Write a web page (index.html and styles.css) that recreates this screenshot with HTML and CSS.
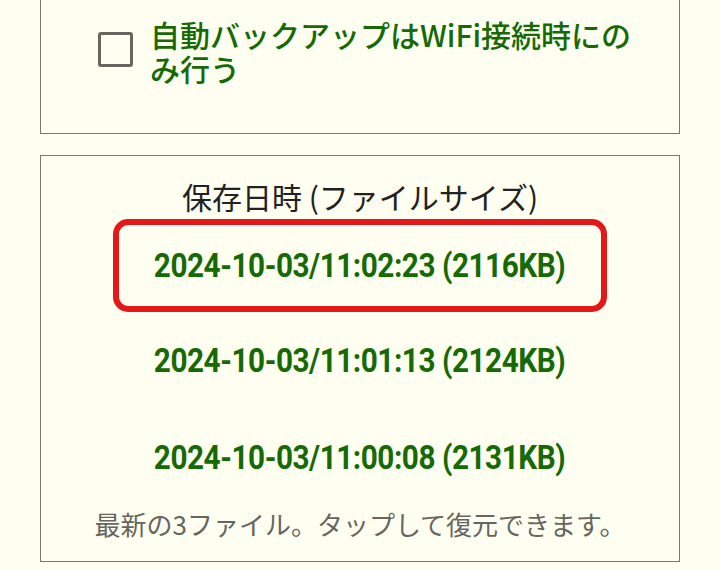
FILE: index.html
```html
<!DOCTYPE html>
<html lang="ja">
<head>
    <meta charset="UTF-8">
    <meta name="viewport" content="width=device-width, initial-scale=1.0">
    <title>バックアップ設定</title>
    <link rel="stylesheet" href="styles.css">
</head>
<body>

    <!-- WiFi option -->
    <div class="panel panel-option">
        <label class="option">
            <span class="check"></span>
            <span class="option-text">自動バックアップはWiFi接続時にのみ行う</span>
        </label>
    </div>

    <!-- Backup list -->
    <div class="panel panel-files">
        <h3 class="files-title">保存日時 (ファイルサイズ)</h3>
        <ul class="files">
            <li class="file selected"><span class="file-name">2024-10-03/11:02:23 (2116KB)</span></li>
            <li class="file"><span class="file-name">2024-10-03/11:01:13 (2124KB)</span></li>
            <li class="file"><span class="file-name">2024-10-03/11:00:08 (2131KB)</span></li>
        </ul>
        <p class="files-note">最新の3ファイル。タップして復元できます。</p>
    </div>

</body>
</html>
```

FILE: styles.css
```css
/* page */
body {
    margin: 0;
    padding: 0 40px;
    background-color: #fefff0;
    font-family: 'Noto Sans CJK JP', 'Noto Sans', sans-serif;
}

.panel {
    border: 1px solid #77776f;
    background-color: #fefff0;
}

/* checkbox option */
.panel-option {
    margin-top: -20px;
    padding: 36px 40px 48px 57px;
}

.option {
    display: flex;
    align-items: flex-start;
    gap: 17px;
}

.check {
    flex: none;
    width: 29px;
    height: 29px;
    margin-top: 15px;
    border: 3px solid #66665f;
    border-radius: 3px;
}

.option-text {
    font-size: 30px;
    line-height: 34px;
    font-weight: 500;
    color: #166a04;
}

/* file list */
.panel-files {
    margin-top: 21px;
    padding: 20px 0 19px;
    text-align: center;
}

.files-title {
    margin: 0;
    font-size: 30px;
    line-height: 40px;
    font-weight: 400;
    color: #222;
}

.files {
    list-style: none;
    margin: 0;
    padding: 0;
}

.file {
    height: 97px;
    display: flex;
    align-items: center;
    justify-content: center;
}

.file-name {
    display: inline-block;
    font-family: 'Roboto', 'Liberation Sans', sans-serif;
    font-size: 33px;
    font-weight: bold;
    letter-spacing: -0.5px;
    color: #166a04;
    transform: scaleX(0.9);
}

.selected {
    box-sizing: border-box;
    width: 494px;
    height: 93px;
    margin: 3px auto 0;
    border: 6px solid #e41818;
    border-radius: 15px;
}

.files-note {
    margin: 0;
    font-size: 26px;
    line-height: 36px;
    color: #66665f;
}
```
